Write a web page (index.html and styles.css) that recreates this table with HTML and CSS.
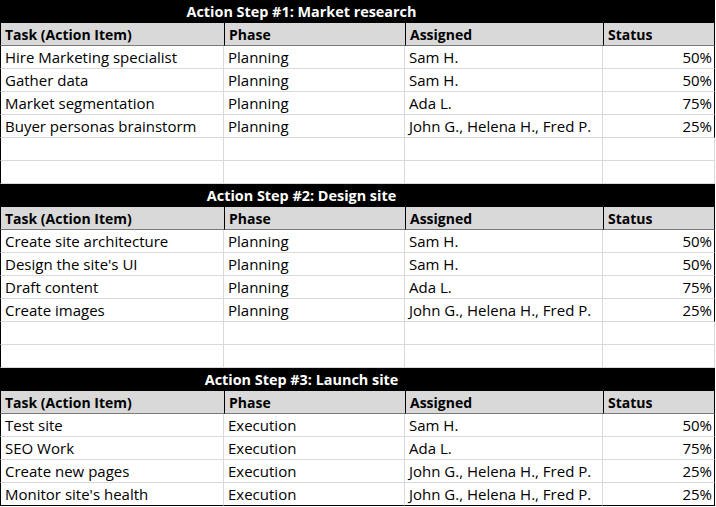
FILE: index.html
```html
<!DOCTYPE html>
<html>
<head>
<meta charset="utf-8">
<link rel="stylesheet" href="styles.css">
</head>
<body>
<div class="sheet">
  <div class="title">Action Step #1: Market research</div><div class="title-end"></div>
  <div class="hd">Task (Action Item)</div><div class="hd">Phase</div><div class="hd">Assigned</div><div class="hd last">Status</div>
  <div class="c first">Hire Marketing specialist</div><div class="c">Planning</div><div class="c">Sam H.</div><div class="c num last">50%</div>
  <div class="c first">Gather data</div><div class="c">Planning</div><div class="c">Sam H.</div><div class="c num last">50%</div>
  <div class="c first">Market segmentation</div><div class="c">Planning</div><div class="c">Ada L.</div><div class="c num last">75%</div>
  <div class="c first">Buyer personas brainstorm</div><div class="c">Planning</div><div class="c">John G., Helena H., Fred P.</div><div class="c num last">25%</div>
  <div class="c first"></div><div class="c"></div><div class="c"></div><div class="c"></div>
  <div class="c first"></div><div class="c"></div><div class="c"></div><div class="c"></div>

  <div class="title">Action Step #2: Design site</div><div class="title-end"></div>
  <div class="hd">Task (Action Item)</div><div class="hd">Phase</div><div class="hd">Assigned</div><div class="hd last">Status</div>
  <div class="c first">Create site architecture</div><div class="c">Planning</div><div class="c">Sam H.</div><div class="c num last">50%</div>
  <div class="c first">Design the site's UI</div><div class="c">Planning</div><div class="c">Sam H.</div><div class="c num last">50%</div>
  <div class="c first">Draft content</div><div class="c">Planning</div><div class="c">Ada L.</div><div class="c num last">75%</div>
  <div class="c first">Create images</div><div class="c">Planning</div><div class="c">John G., Helena H., Fred P.</div><div class="c num last">25%</div>
  <div class="c first"></div><div class="c"></div><div class="c"></div><div class="c"></div>
  <div class="c first"></div><div class="c"></div><div class="c"></div><div class="c"></div>

  <div class="title">Action Step #3: Launch site</div><div class="title-end"></div>
  <div class="hd">Task (Action Item)</div><div class="hd">Phase</div><div class="hd">Assigned</div><div class="hd last">Status</div>
  <div class="c first">Test site</div><div class="c">Execution</div><div class="c">Sam H.</div><div class="c num last">50%</div>
  <div class="c first">SEO Work</div><div class="c">Execution</div><div class="c">Ada L.</div><div class="c num last">75%</div>
  <div class="c first">Create new pages</div><div class="c">Execution</div><div class="c">John G., Helena H., Fred P.</div><div class="c num last">25%</div>
  <div class="c first bot">Monitor site's health</div><div class="c bot">Execution</div><div class="c bot">John G., Helena H., Fred P.</div><div class="c num last bot">25%</div>
</div>
</body>
</html>
```
FILE: styles.css
```css
html, body {
  margin: 0;
  padding: 0;
  background: #ffffff;
}
body {
  font-family: "Open Sans", Lato, "Liberation Sans", sans-serif;
  font-size: 15px;
  color: #000;
}
.sheet {
  display: grid;
  grid-template-columns: 224px 181px 198px 112px;
  grid-auto-rows: 23px;
  width: 715px;
}
.sheet > div {
  box-sizing: border-box;
  line-height: 21px;
  padding-top: 1px;
  white-space: nowrap;
  overflow: hidden;
}
.title {
  grid-column: 1 / 4;
  background: #000;
  color: #fff;
  font-weight: bold;
  font-size: 14.4px;
  text-align: center;
}
.title-end {
  background: #000;
}
.hd {
  background: #d9d9d9;
  font-weight: bold;
  font-size: 14px;
  padding-left: 4px;
  border-left: 1px solid #000;
  border-bottom: 1px solid #7a7a7a;
}
.hd.last {
  border-right: 1px solid #000;
}
.c {
  padding-left: 4px;
  border-right: 1px solid #d9d9d9;
  border-bottom: 1px solid #d9d9d9;
}
.c.first {
  border-left: 1px solid #000;
}
.c.last {
  border-right: 1px solid #000;
}
.c.num {
  text-align: right;
  padding-right: 2px;
}
.c.bot {
  border-bottom: 1px solid #000;
}
```
